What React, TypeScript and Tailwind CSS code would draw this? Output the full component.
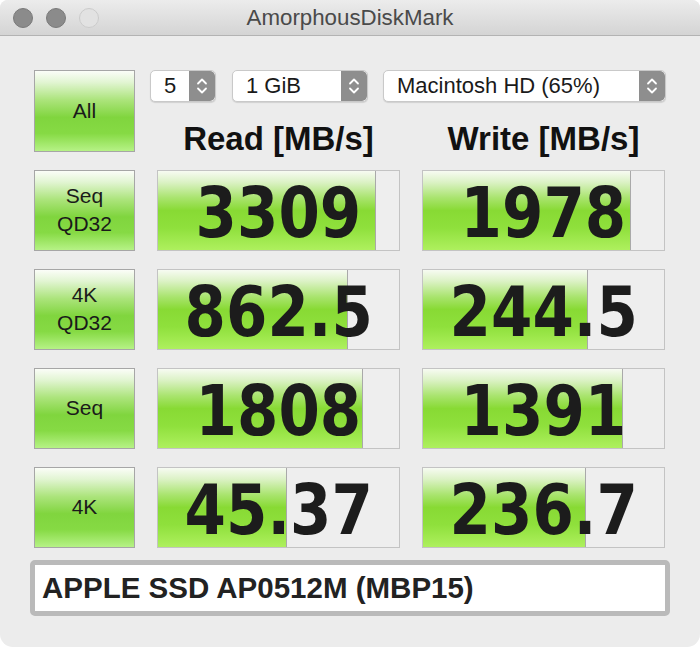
import React from "react";

const BTN_BG =
  "linear-gradient(to bottom, #fbfdf8 0%, #e2f5d3 14%, #ace47c 36%, #80d53e 58%, #86da44 78%, #b6f286 100%)";
const BAR_BG =
  "linear-gradient(to bottom, #f7fbf2 0%, #dcf2c6 14%, #a9e46e 34%, #88da34 50%, #8fe03c 72%, #aef05e 100%)";

function Stepper() {
  return (
    <div className="w-[26px] h-full bg-[#8e8e8e] rounded-r-[5px] flex items-center justify-center">
      <svg width="12" height="20" viewBox="0 0 12 20" fill="none">
        <path d="M2 7.5 L6 3.5 L10 7.5" stroke="white" strokeWidth="1.8" strokeLinecap="round" strokeLinejoin="round" />
        <path d="M2 12.5 L6 16.5 L10 12.5" stroke="white" strokeWidth="1.8" strokeLinecap="round" strokeLinejoin="round" />
      </svg>
    </div>
  );
}

function Select({ label, w }: { label: string; w: string }) {
  return (
    <div className={`${w} h-[32px] flex bg-white rounded-[5px] border border-[#c9c9c9] shadow-[0_1px_1px_rgba(0,0,0,0.12)] overflow-hidden`}>
      <div className="flex-1 flex items-center pl-[13px] text-[22px] text-[#1a1a1a] leading-none">{label}</div>
      <Stepper />
    </div>
  );
}

function TestButton({ lines, tall }: { lines: string[]; tall?: boolean }) {
  return (
    <div
      className={`w-[101px] ${tall ? "h-[82px]" : "h-[81.5px]"} border-[1.5px] border-[#a6a6a6] flex flex-col items-center justify-center text-[21px] leading-[28px] text-[#1a1a1a]`}
      style={{ background: BTN_BG }}
    >
      {lines.map((l) => (
        <div key={l}>{l}</div>
      ))}
    </div>
  );
}

function Cell({ value, pct }: { value: string; pct: number }) {
  return (
    <div className="relative w-[243px] h-[81.5px] border border-[#c3c3c3] bg-[#eeeeee] flex">
      <div className="h-full border-r border-[#a9a9a9]" style={{ width: `${pct}%`, background: BAR_BG }} />
      <div className="absolute inset-0 flex items-center justify-center">
        <span
          className="inline-block scale-x-[0.85] translate-y-[3px] text-[70px] leading-none font-bold text-[#1c1c1c]"
          style={{ fontFamily: '"DejaVu Sans", sans-serif' }}
        >
          {value}
        </span>
      </div>
    </div>
  );
}

const rows = [
  { lines: ["Seq", "QD32"], r: "3309", rp: 90.5, w: "1978", wp: 86.2 },
  { lines: ["4K", "QD32"], r: "862.5", rp: 78.8, w: "244.5", wp: 68.3 },
  { lines: ["Seq"], r: "1808", rp: 85.0, w: "1391", wp: 83.0 },
  { lines: ["4K"], r: "45.37", rp: 53.5, w: "236.7", wp: 67.6 },
];

export default function App() {
  return (
    <div className="w-[700px] h-[647px] bg-white" style={{ fontFamily: '"Liberation Sans", Arial, sans-serif' }}>
      <div className="w-full h-full rounded-t-[8px] rounded-b-[13px] bg-[#ececec] overflow-hidden flex flex-col">
        {/* title bar */}
        <div className="relative h-[36px] shrink-0 border-b border-[#b3b3b3] bg-[linear-gradient(to_bottom,#ececec,#d4d4d4)] flex items-center">
          <div className="flex items-center gap-[13px] pl-[13px]">
            <div className="w-[20px] h-[20px] rounded-full bg-[#8b8b8b] border border-[#7a7a7a]" />
            <div className="w-[20px] h-[20px] rounded-full bg-[#8b8b8b] border border-[#7a7a7a]" />
            <div className="w-[20px] h-[20px] rounded-full bg-[#e2e2e2] border border-[#cbcbcb]" />
          </div>
          <div className="absolute inset-0 flex items-center justify-center text-[22.3px] text-[#4a4a4a] leading-none pt-[1px]">
            AmorphousDiskMark
          </div>
        </div>

        {/* body */}
        <div className="flex flex-col pl-[34px] pt-[34px]">
          <div className="flex">
            <TestButton lines={["All"]} tall />
            <div className="ml-[15px] flex flex-col">
              <div className="flex items-center">
                <Select label="5" w="w-[66px]" />
                <div className="w-[16px]" />
                <Select label="1 GiB" w="w-[136px]" />
                <div className="w-[15px]" />
                <Select label="Macintosh HD (65%)" w="w-[283px]" />
              </div>
              <div className="flex ml-[7px] gap-[22px] h-[50px] items-center pt-[23px]">
                <div className="w-[243px] text-center text-[33px] font-bold text-[#111] leading-none">Read [MB/s]</div>
                <div className="w-[243px] text-center text-[33px] font-bold text-[#111] leading-none">Write [MB/s]</div>
              </div>
            </div>
          </div>

          <div className="flex flex-col gap-[17.5px] mt-[17.5px]">
            {rows.map((row) => (
              <div key={row.r} className="flex gap-[22px]">
                <TestButton lines={row.lines} />
                <Cell value={row.r} pct={row.rp} />
                <Cell value={row.w} pct={row.wp} />
              </div>
            ))}
          </div>

          <div className="-ml-[4px] mt-[12px] w-[640px] h-[56px] rounded-[5px] border-[5px] border-[#bababa] bg-white flex items-center pl-[7px]">
            <span className="text-[29.5px] font-bold text-[#222] leading-none">APPLE SSD AP0512M (MBP15)</span>
          </div>
        </div>
      </div>
    </div>
  );
}
